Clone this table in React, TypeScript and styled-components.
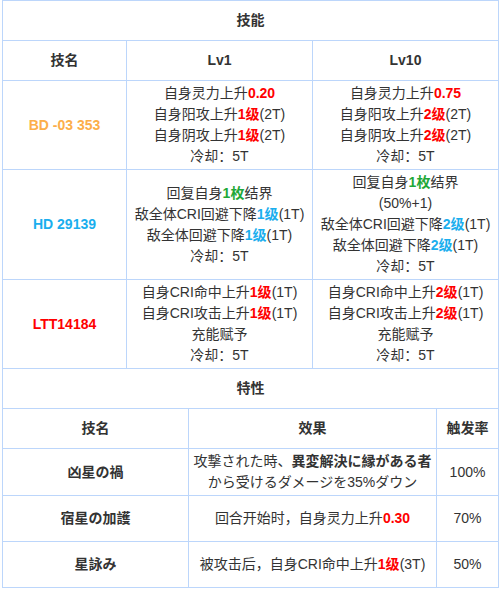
import React from 'react';
import styled, { createGlobalStyle } from 'styled-components';

const colors = {
  line: '#bcd6fb',
  text: '#333333',
  red: '#ff0000',
  blue: '#1aaeee',
  green: '#1fa838',
  orange: '#fcae4a',
  white: '#ffffff',
};

type Tone = 'red' | 'blue' | 'green' | 'bold';
type Seg = string | { t: string; tone: Tone };
type Line = Seg[];

const GlobalStyle = createGlobalStyle`
  body {
    margin: 0;
    background: ${colors.white};
    font-family: 'Liberation Sans', 'Noto Sans CJK SC', 'Noto Sans CJK JP', sans-serif;
    font-size: 14px;
    line-height: 21px;
    color: ${colors.text};
  }
`;

const skills: { name: string; color: string; lv1: Line[]; lv10: Line[] }[] = [
  {
    name: 'BD -03 353',
    color: colors.orange,
    lv1: [
      ['自身灵力上升', { t: '0.20', tone: 'red' }],
      ['自身阳攻上升', { t: '1级', tone: 'red' }, '(2T)'],
      ['自身阴攻上升', { t: '1级', tone: 'red' }, '(2T)'],
      ['冷却：5T'],
    ],
    lv10: [
      ['自身灵力上升', { t: '0.75', tone: 'red' }],
      ['自身阳攻上升', { t: '2级', tone: 'red' }, '(2T)'],
      ['自身阴攻上升', { t: '2级', tone: 'red' }, '(2T)'],
      ['冷却：5T'],
    ],
  },
  {
    name: 'HD 29139',
    color: colors.blue,
    lv1: [
      ['回复自身', { t: '1枚', tone: 'green' }, '结界'],
      ['敌全体CRI回避下降', { t: '1级', tone: 'blue' }, '(1T)'],
      ['敌全体回避下降', { t: '1级', tone: 'blue' }, '(1T)'],
      ['冷却：5T'],
    ],
    lv10: [
      ['回复自身', { t: '1枚', tone: 'green' }, '结界'],
      ['(50%+1)'],
      ['敌全体CRI回避下降', { t: '2级', tone: 'blue' }, '(1T)'],
      ['敌全体回避下降', { t: '2级', tone: 'blue' }, '(1T)'],
      ['冷却：5T'],
    ],
  },
  {
    name: 'LTT14184',
    color: colors.red,
    lv1: [
      ['自身CRI命中上升', { t: '1级', tone: 'red' }, '(1T)'],
      ['自身CRI攻击上升', { t: '1级', tone: 'red' }, '(1T)'],
      ['充能赋予'],
      ['冷却：5T'],
    ],
    lv10: [
      ['自身CRI命中上升', { t: '2级', tone: 'red' }, '(1T)'],
      ['自身CRI攻击上升', { t: '2级', tone: 'red' }, '(1T)'],
      ['充能赋予'],
      ['冷却：5T'],
    ],
  },
];

const traits: { name: string; effect: Seg[]; rate: string }[] = [
  {
    name: '凶星の禍',
    effect: ['攻撃された時、', { t: '異変解決に縁がある者', tone: 'bold' }, 'から受けるダメージを35%ダウン'],
    rate: '100%',
  },
  {
    name: '宿星の加護',
    effect: ['回合开始时，自身灵力上升', { t: '0.30', tone: 'red' }],
    rate: '70%',
  },
  {
    name: '星詠み',
    effect: ['被攻击后，自身CRI命中上升', { t: '1级', tone: 'red' }, '(3T)'],
    rate: '50%',
  },
];

const toneColor: Record<Tone, string> = {
  red: colors.red,
  blue: colors.blue,
  green: colors.green,
  bold: colors.text,
};

const Segments = ({ segs }: { segs: Seg[] }) => (
  <>
    {segs.map((s, i) =>
      typeof s === 'string' ? (
        <React.Fragment key={i}>{s}</React.Fragment>
      ) : (
        <Em key={i} $tone={s.tone}>
          {s.t}
        </Em>
      )
    )}
  </>
);

const App = () => {
  return (
    <>
      <GlobalStyle />
      <Page>
        <Grid $cols="124px 186px 186px">
          <TitleCell>技能</TitleCell>
          <HeadCell>技名</HeadCell>
          <HeadCell>Lv1</HeadCell>
          <HeadCell>Lv10</HeadCell>
          {skills.map((s) => (
            <React.Fragment key={s.name}>
              <NameCell $color={s.color}>{s.name}</NameCell>
              <Cell>
                {s.lv1.map((l, i) => (
                  <TextLine key={i}>
                    <Segments segs={l} />
                  </TextLine>
                ))}
              </Cell>
              <Cell>
                {s.lv10.map((l, i) => (
                  <TextLine key={i}>
                    <Segments segs={l} />
                  </TextLine>
                ))}
              </Cell>
            </React.Fragment>
          ))}
        </Grid>
        <Grid $cols="186px 248px 62px" $open>
          <TitleCell>特性</TitleCell>
          <HeadCell>技名</HeadCell>
          <HeadCell>效果</HeadCell>
          <HeadCell>触发率</HeadCell>
          {traits.map((t) => (
            <React.Fragment key={t.name}>
              <TraitName>{t.name}</TraitName>
              <TraitCell>
                <Segments segs={t.effect} />
              </TraitCell>
              <TraitCell>{t.rate}</TraitCell>
            </React.Fragment>
          ))}
        </Grid>
      </Page>
    </>
  );
};

const Page = styled.div`
  display: flex;
  flex-direction: column;
  width: 497px;
  padding-left: 2px;
`;

const Grid = styled.div<{ $cols: string; $open?: boolean }>`
  display: grid;
  grid-template-columns: ${(p) => p.$cols};
  border-left: 1px solid ${colors.line};
  border-top: ${(p) => (p.$open ? 'none' : `1px solid ${colors.line}`)};
`;

const Cell = styled.div`
  display: flex;
  flex-direction: column;
  align-items: center;
  justify-content: center;
  padding: 2px 4px;
  border-right: 1px solid ${colors.line};
  border-bottom: 1px solid ${colors.line};
  text-align: center;
  box-sizing: border-box;
`;

const TitleCell = styled(Cell)`
  grid-column: 1 / -1;
  height: 40px;
  font-weight: bold;
`;

const HeadCell = styled(Cell)`
  height: 40px;
  font-weight: bold;
`;

const NameCell = styled(Cell)<{ $color: string }>`
  color: ${(p) => p.$color};
  font-weight: bold;
`;

const TraitCell = styled(Cell)`
  min-height: 46px;
  display: block;
  align-content: center;
`;

const TraitName = styled(TraitCell)`
  font-weight: bold;
`;

const TextLine = styled.div`
  white-space: nowrap;
`;

const Em = styled.span<{ $tone: Tone }>`
  color: ${(p) => toneColor[p.$tone]};
  font-weight: bold;
`;

export default App;
